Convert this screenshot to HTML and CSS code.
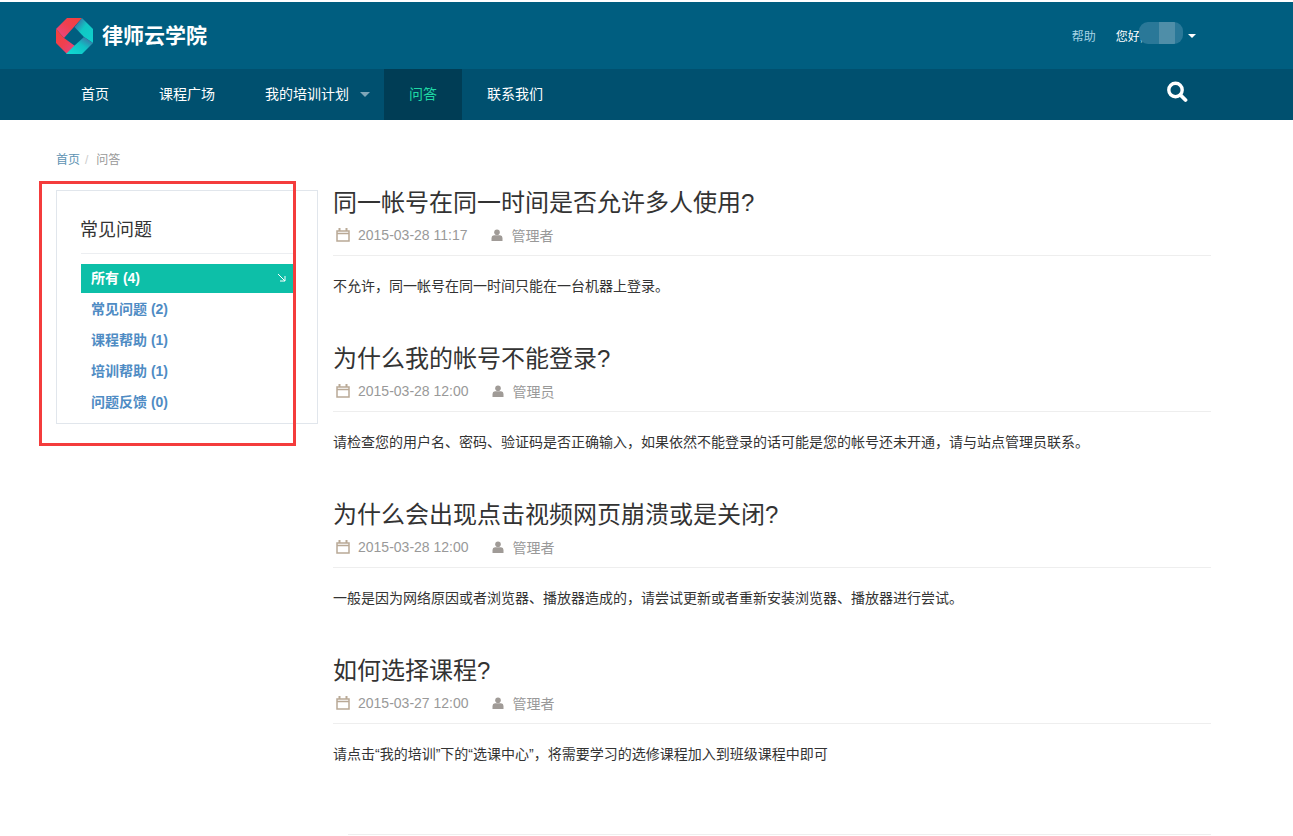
FILE: index.html
```html
<!DOCTYPE html>
<html lang="zh-CN">
<head>
<meta charset="utf-8">
<title>律师云学院</title>
<link rel="stylesheet" href="styles.css">
</head>
<body>
<header class="topbar">
  <a class="brand" href="#">
    <svg class="logo" viewBox="0 0 37 36" width="37" height="36" aria-hidden="true">
      <defs>
        <linearGradient id="g1" x1="0" y1="1" x2="1" y2="0"><stop offset="0" stop-color="#e8488a"/><stop offset=".55" stop-color="#f0404f"/><stop offset="1" stop-color="#f2413c"/></linearGradient>
        <linearGradient id="g2" x1="0" y1="0" x2="1" y2="1"><stop offset="0" stop-color="#f2413c"/><stop offset=".5" stop-color="#f0404f"/><stop offset="1" stop-color="#e0468e"/></linearGradient>
        <linearGradient id="g3" x1="0" y1="0" x2="1" y2="1"><stop offset="0" stop-color="#4a4f9a"/><stop offset=".45" stop-color="#10c8c4"/><stop offset="1" stop-color="#10d0cc"/></linearGradient>
        <linearGradient id="g4" x1="1" y1="0" x2="0" y2="1"><stop offset="0" stop-color="#4a5a9a"/><stop offset=".45" stop-color="#10c0c4"/><stop offset="1" stop-color="#10dcd4"/></linearGradient>
      </defs>
      <polygon points="0,11 11,0 26,0 8,20" fill="url(#g1)"/>
      <polygon points="0,11 8,20 19,28 11,36 0,25" fill="url(#g2)"/>
      <polygon points="26,0 37,11 37,25 28,19 18.500,9" fill="url(#g3)"/>
      <polygon points="37,25 28,19 18,28 10,36 26,36" fill="url(#g4)"/>
    </svg>
    <span class="brand-name">律师云学院</span>
  </a>
  <div class="user-area">
    <a class="help" href="#">帮助</a>
    <span class="greeting">您好,<span class="masked"></span><span class="caret caret-white"></span></span>
  </div>
</header>
<nav class="mainnav">
  <ul class="nav-list">
    <li><a href="#">首页</a></li>
    <li><a href="#">课程广场</a></li>
    <li><a href="#">我的培训计划<span class="caret caret-muted"></span></a></li>
    <li class="active"><a href="#">问答</a></li>
    <li><a href="#">联系我们</a></li>
  </ul>
  <svg class="search" viewBox="0 0 22 22" width="22" height="22" aria-hidden="true">
    <circle cx="9.500" cy="9" r="6.700" fill="none" stroke="#fff" stroke-width="3.400"/>
    <line x1="14.500" y1="14" x2="19.500" y2="19" stroke="#fff" stroke-width="3.800" stroke-linecap="round"/>
  </svg>
</nav>
<div class="breadcrumb"><a href="#">首页</a><span class="sep">/</span><span class="current">问答</span></div>
<main class="layout">
  <aside class="panel">
    <h3 class="panel-title">常见问题</h3>
    <ul class="cat-list">
      <li class="active"><a href="#">所有 (4)<svg class="arrow" viewBox="0 0 9 9" width="9" height="9" aria-hidden="true"><path d="M1 1 L8 8 M8 3 V8 H3" fill="none" stroke="#fff" stroke-width="1"/></svg></a></li>
      <li><a href="#">常见问题 (2)</a></li>
      <li><a href="#">课程帮助 (1)</a></li>
      <li><a href="#">培训帮助 (1)</a></li>
      <li><a href="#">问题反馈 (0)</a></li>
    </ul>
  </aside>
  <section class="articles">
    <article class="faq">
      <h2>同一帐号在同一时间是否允许多人使用?</h2>
      <div class="meta">
        <svg class="ico-cal" viewBox="0 0 14 14" width="14" height="14" aria-hidden="true"><path d="M1 3 H13 V13 H1 Z M1 5.500 H13" fill="none" stroke="#b9a996" stroke-width="1.500"/><path d="M3.500 0 V3 M10.500 0 V3" stroke="#b9a996" stroke-width="2"/></svg>
        <span class="date">2015-03-28 11:17</span>
        <svg class="ico-user" viewBox="0 0 12 12" width="12" height="12" aria-hidden="true"><circle cx="6" cy="3.200" r="2.800" fill="#a09b97"/><path d="M0.500 12 V9 Q0.500 6.500 3 6.200 H9 Q11.500 6.500 11.500 9 V12 Z" fill="#a09b97"/></svg>
        <span>管理者</span>
      </div>
      <p>不允许，同一帐号在同一时间只能在一台机器上登录。</p>
    </article>
    <article class="faq">
      <h2>为什么我的帐号不能登录?</h2>
      <div class="meta">
        <svg class="ico-cal" viewBox="0 0 14 14" width="14" height="14" aria-hidden="true"><path d="M1 3 H13 V13 H1 Z M1 5.500 H13" fill="none" stroke="#b9a996" stroke-width="1.500"/><path d="M3.500 0 V3 M10.500 0 V3" stroke="#b9a996" stroke-width="2"/></svg>
        <span class="date">2015-03-28 12:00</span>
        <svg class="ico-user" viewBox="0 0 12 12" width="12" height="12" aria-hidden="true"><circle cx="6" cy="3.200" r="2.800" fill="#a09b97"/><path d="M0.500 12 V9 Q0.500 6.500 3 6.200 H9 Q11.500 6.500 11.500 9 V12 Z" fill="#a09b97"/></svg>
        <span>管理员</span>
      </div>
      <p>请检查您的用户名、密码、验证码是否正确输入，如果依然不能登录的话可能是您的帐号还未开通，请与站点管理员联系。</p>
    </article>
    <article class="faq">
      <h2>为什么会出现点击视频网页崩溃或是关闭?</h2>
      <div class="meta">
        <svg class="ico-cal" viewBox="0 0 14 14" width="14" height="14" aria-hidden="true"><path d="M1 3 H13 V13 H1 Z M1 5.500 H13" fill="none" stroke="#b9a996" stroke-width="1.500"/><path d="M3.500 0 V3 M10.500 0 V3" stroke="#b9a996" stroke-width="2"/></svg>
        <span class="date">2015-03-28 12:00</span>
        <svg class="ico-user" viewBox="0 0 12 12" width="12" height="12" aria-hidden="true"><circle cx="6" cy="3.200" r="2.800" fill="#a09b97"/><path d="M0.500 12 V9 Q0.500 6.500 3 6.200 H9 Q11.500 6.500 11.500 9 V12 Z" fill="#a09b97"/></svg>
        <span>管理者</span>
      </div>
      <p>一般是因为网络原因或者浏览器、播放器造成的，请尝试更新或者重新安装浏览器、播放器进行尝试。</p>
    </article>
    <article class="faq">
      <h2>如何选择课程?</h2>
      <div class="meta">
        <svg class="ico-cal" viewBox="0 0 14 14" width="14" height="14" aria-hidden="true"><path d="M1 3 H13 V13 H1 Z M1 5.500 H13" fill="none" stroke="#b9a996" stroke-width="1.500"/><path d="M3.500 0 V3 M10.500 0 V3" stroke="#b9a996" stroke-width="2"/></svg>
        <span class="date">2015-03-27 12:00</span>
        <svg class="ico-user" viewBox="0 0 12 12" width="12" height="12" aria-hidden="true"><circle cx="6" cy="3.200" r="2.800" fill="#a09b97"/><path d="M0.500 12 V9 Q0.500 6.500 3 6.200 H9 Q11.500 6.500 11.500 9 V12 Z" fill="#a09b97"/></svg>
        <span>管理者</span>
      </div>
      <p>请点击“我的培训”下的“选课中心”，将需要学习的选修课程加入到班级课程中即可</p>
    </article>
  </section>
</main>
<footer class="foot"></footer>
<div class="annotation"></div>
</body>
</html>
```
FILE: styles.css
```css
* { box-sizing: border-box; }
html, body { margin: 0; padding: 0; }
body {
  position: relative;
  background: #fff;
  color: #333;
  font-family: "Liberation Sans", "Noto Sans CJK SC", sans-serif;
  font-size: 14px;
  padding-top: 2px;
  height: 836px;
  overflow: hidden;
}
a { text-decoration: none; color: inherit; }
ul { list-style: none; margin: 0; padding: 0; }

.topbar {
  height: 67px;
  background: #005e80;
  display: flex;
  align-items: center;
  justify-content: space-between;
  padding: 0 97px 0 56px;
}
.brand { display: flex; align-items: center; gap: 9px; }
.logo { display: block; }
.brand-name { color: #fff; font-size: 21px; font-weight: 700; line-height: 1; }
.user-area { display: flex; align-items: center; gap: 20px; font-size: 12px; }
.help { color: #a6d3e4; }
.greeting { color: #fff; display: flex; align-items: center; position: relative; }
.masked {
  display: inline-block;
  width: 44px;
  height: 22px;
  margin: -5px 0 0 -4px;
  border-radius: 9px;
  background: linear-gradient(90deg, #2a7898 0 45%, #4f8ea8 45% 82%, #2a7898 82% 100%);
}
.caret { display: inline-block; width: 0; height: 0; border-style: solid; border-color: transparent; border-bottom-width: 0; }
.caret-white { border-width: 4px 4px 0; border-top-color: #fff; margin-left: 5px; }
.caret-muted { border-width: 5px 5px 0; border-top-color: #7fa6b8; margin-left: 11px; vertical-align: 2px; }

.mainnav {
  height: 51px;
  background: #00506f;
  display: flex;
  align-items: center;
  justify-content: space-between;
  padding: 0 105px 0 56px;
}
.nav-list { display: flex; height: 100%; }
.nav-list li a {
  display: block;
  height: 100%;
  line-height: 51px;
  padding: 0 25px;
  color: #fff;
  font-size: 14px;
}
.nav-list li:nth-child(3) a { padding-right: 14px; }
.nav-list li.active a { background: #003d55; color: #1fd8a4; }
.search { display: block; margin-top: -6px; }

.breadcrumb {
  padding: 32px 0 0 56px;
  height: 70px;
  font-size: 12px;
  line-height: 16px;
  color: #999;
}
.breadcrumb a { color: #5d93b3; }
.breadcrumb .sep { color: #ccc; margin: 0 8px 0 5px; }

.layout {
  display: flex;
  align-items: flex-start;
  padding: 0 82px 0 56px;
  gap: 15px;
}
.panel {
  flex: 0 0 262px;
  height: 234px;
  border: 1px solid #e1e6ec;
  padding: 25px 24px 0;
}
.panel-title {
  margin: 0;
  font-size: 18px;
  font-weight: 400;
  line-height: 28px;
  height: 38px;
  text-indent: -1px;
  color: #333;
  border-bottom: 1px solid #eceef1;
}
.cat-list { margin-top: 10px; display: flex; flex-direction: column; gap: 2px; }
.cat-list a {
  display: flex;
  align-items: center;
  justify-content: space-between;
  height: 29px;
  padding: 0 7px 3px 10px;
  font-size: 14px;
  font-weight: 700;
  color: #4f8cc4;
}
.cat-list .active a { background: #0dbfa8; color: #fff; }

.articles { flex: 1; min-width: 0; }
.faq { height: 156px; }
.faq h2 {
  margin: 0;
  font-size: 24px;
  font-weight: 400;
  line-height: 26px;
  color: #333;
}
.meta {
  display: flex;
  align-items: center;
  height: 40px;
  margin-bottom: 20px;
  padding: 0 0 2px 3px;
  border-bottom: 1px solid #eee;
  color: #999;
  font-size: 14px;
}
.ico-cal { margin-right: 8px; }
.date { margin-right: 23px; }
.ico-user { margin-right: 9px; }
.faq p {
  margin: 0;
  font-size: 14px;
  line-height: 20px;
  color: #333;
}

.foot {
  margin: 20px 82px 0 348px;
  border-top: 1px solid #eee;
}

.annotation {
  position: absolute;
  left: 39px;
  top: 181px;
  width: 257px;
  height: 265px;
  border: 3px solid #f43c3c;
  pointer-events: none;
}
```
